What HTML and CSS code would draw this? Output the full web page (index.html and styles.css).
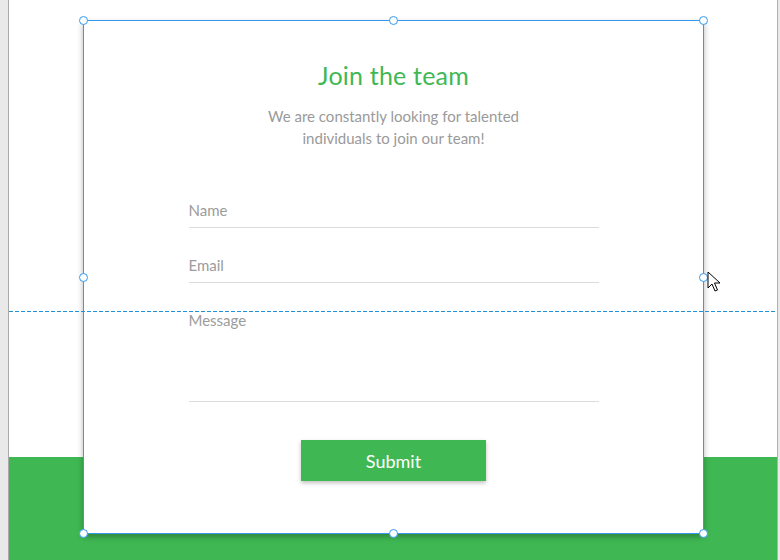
FILE: index.html
```html
<!DOCTYPE html>
<html>
<head>
<meta charset="utf-8">
<link rel="stylesheet" href="styles.css">
</head>
<body>
<div class="editor">
  <div class="gutter gutter-left"></div>
  <div class="page">
    <div class="strip-white"></div>
    <div class="strip-green"></div>

    <div class="card">
      <h1 class="title">Join the team</h1>
      <p class="subtitle">We are constantly looking for talented<br>individuals to join our team!</p>
      <form class="form">
        <div class="field"><span class="label">Name</span></div>
        <div class="field"><span class="label">Email</span></div>
        <div class="field field-msg"><span class="label">Message</span></div>
        <div class="actions"><button type="button" class="submit">Submit</button></div>
      </form>

      <span class="handle h-tl"></span>
      <span class="handle h-tc"></span>
      <span class="handle h-tr"></span>
      <span class="handle h-ml"></span>
      <span class="handle h-mr"></span>
      <span class="handle h-bl"></span>
      <span class="handle h-bc"></span>
      <span class="handle h-br"></span>
    </div>

    <div class="guide"></div>

    <svg class="cursor" width="14" height="22" viewBox="0 0 14 22">
      <path d="M1 1 L1 17 L5 13 L8 20 L10.5 19 L7.5 12 L13 12 Z" fill="#fff" stroke="#000" stroke-width="1" stroke-linejoin="miter"/>
    </svg>
  </div>
  <div class="gutter gutter-right"></div>
</div>
</body>
</html>
```
FILE: styles.css
```css
html, body {
  margin: 0;
  padding: 0;
  background: #ececec;
}
.editor {
  display: flex;
  width: 780px;
  height: 560px;
  overflow: hidden;
  font-family: "Lato", "Open Sans", sans-serif;
}
.gutter {
  background: #e9e9e9;
}
.gutter-left {
  width: 8px;
  border-right: 1px solid #a9a9a9;
}
.gutter-right {
  width: 2px;
  border-left: 1px solid #b0b0b0;
}
.page {
  flex: 1;
  position: relative;
  display: flex;
  flex-direction: column;
}
.strip-white {
  height: 457px;
  background: #fff;
}
.strip-green {
  flex: 1;
  background: #3fb853;
}
.guide {
  position: absolute;
  left: 0;
  right: 0;
  top: 311px;
  height: 1px;
  background: repeating-linear-gradient(to right, #1f93d6 0 4px, transparent 4px 6px);
}
.card {
  position: absolute;
  left: 74px;
  top: 20px;
  width: 621px;
  height: 514px;
  box-sizing: border-box;
  background: #fff;
  border: 1px solid #3899ec;
  box-shadow: 0 3px 6px rgba(0, 0, 0, 0.28);
  display: flex;
  flex-direction: column;
  align-items: center;
  padding-top: 38px;
}
.title {
  margin: 0;
  font-weight: 400;
  font-size: 25px;
  line-height: 32px;
  color: #3fb853;
  letter-spacing: 0.2px;
}
.subtitle {
  margin: 14px 0 0;
  text-align: center;
  font-size: 15px;
  line-height: 22px;
  color: #9a9a9a;
}
.form {
  margin-top: 46px;
  width: 410px;
  display: flex;
  flex-direction: column;
  gap: 22px;
}
.field {
  height: 33px;
  border-bottom: 1px solid #dcdcdc;
  box-sizing: border-box;
  padding-top: 5px;
}
.field-msg {
  height: 97px;
}
.label {
  font-size: 15px;
  line-height: 20px;
  color: #9c9c9c;
}
.actions {
  display: flex;
  justify-content: center;
  margin-top: 16px;
}
.submit {
  width: 185px;
  height: 41px;
  border: 0;
  background: #3fb853;
  color: #fff;
  font-family: inherit;
  font-size: 18px;
  box-shadow: 0 2px 4px rgba(0, 0, 0, 0.25);
}
.handle {
  position: absolute;
  width: 7px;
  height: 7px;
  border: 1px solid #3899ec;
  border-radius: 50%;
  background: #fff;
}
.h-tl { left: -5px; top: -5px; }
.h-tc { left: 305px; top: -5px; }
.h-tr { right: -5px; top: -5px; }
.h-ml { left: -5px; top: 252px; }
.h-mr { right: -5px; top: 252px; }
.h-bl { left: -5px; bottom: -5px; }
.h-bc { left: 305px; bottom: -5px; }
.h-br { right: -5px; bottom: -5px; }
.cursor {
  position: absolute;
  left: 698px;
  top: 271px;
}
```
